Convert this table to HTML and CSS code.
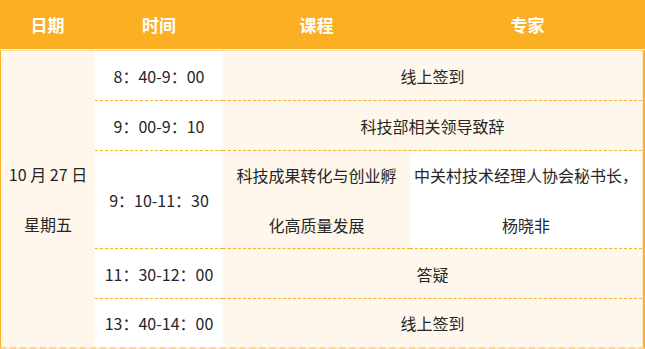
FILE: index.html
```html
<!DOCTYPE html>
<html lang="zh-CN">
<head>
<meta charset="utf-8">
<title>日程</title>
<link rel="stylesheet" href="styles.css">
</head>
<body>
<div class="schedule">
  <div class="head">
    <div class="hcell">日期</div>
    <div class="hcell">时间</div>
    <div class="hcell">课程</div>
    <div class="hcell">专家</div>
  </div>
  <div class="grid">
    <div class="date">10 月 27 日<br>星期五</div>

    <div class="cell time">8：40-9：00</div>
    <div class="cell merged">线上签到</div>

    <div class="cell time">9：00-9：10</div>
    <div class="cell merged">科技部相关领导致辞</div>

    <div class="cell time">9：10-11：30</div>
    <div class="cell course">科技成果转化与创业孵化高质量发展</div>
    <div class="cell expert">中关村技术经理人协会秘书长，杨晓非</div>

    <div class="cell time">11：30-12：00</div>
    <div class="cell merged">答疑</div>

    <div class="cell time last">13：40-14：00</div>
    <div class="cell merged last">线上签到</div>
  </div>
</div>
</body>
</html>
```

FILE: styles.css
```css
* { box-sizing: border-box; }

html, body {
  margin: 0;
  padding: 0;
  background: #ffffff;
}

.schedule {
  width: 645px;
  font-family: "Noto Sans CJK SC", "Noto Sans", sans-serif;
  font-size: 16px;
  color: #262626;
}

.head {
  display: grid;
  grid-template-columns: 95px 128px 187px 235px;
  height: 50px;
  background: #fbb023;
  border-bottom: 1px solid #fff1da;
}

.hcell {
  display: flex;
  align-items: center;
  justify-content: center;
  color: #ffffff;
  font-weight: 700;
  font-size: 17px;
}

.grid {
  display: grid;
  grid-template-columns: 94px 128px 187px 232px;
  grid-template-rows: 50px 50px 98px 50px 48px;
  border-top: 1px solid #fcdba3;
  border-left: 1px solid #fbb023;
  border-right: 2px solid #fbb023;
  border-bottom: 2px dashed #fdd594;
  padding-right: 1px;
  background: #fdebcf;
}

.date {
  grid-row: 1 / 6;
  grid-column: 1;
  background: #fff7eb;
  display: flex;
  align-items: center;
  justify-content: center;
  text-align: center;
  line-height: 50px;
}

.cell {
  display: flex;
  align-items: center;
  justify-content: center;
  text-align: center;
  border-bottom: 1px dashed #fbb023;
}

.cell.last {
  border-bottom: none;
}

.time {
  background: #ffffff;
}

.merged {
  grid-column: 3 / 5;
  background: #fff7eb;
}

.course {
  background: #fff7eb;
  padding: 0 12px;
  line-height: 50px;
}

.expert {
  background: #ffffff;
  padding: 0 4px;
  line-height: 50px;
}
```
